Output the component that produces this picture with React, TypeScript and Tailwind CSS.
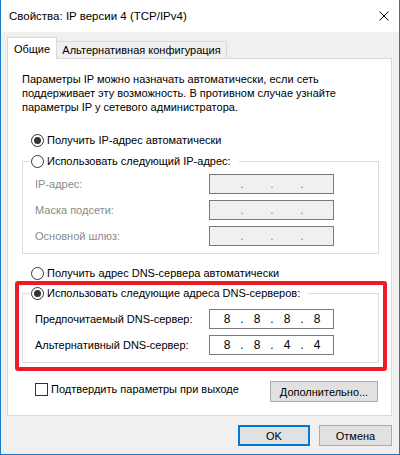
import type { ReactNode } from "react";

function Radio({ checked }: { checked?: boolean }) {
  return (
    <span className="flex h-[13px] w-[13px] shrink-0 items-center justify-center rounded-full border border-[#333333] bg-white">
      {checked ? <span className="h-[7px] w-[7px] rounded-full bg-[#333333]" /> : null}
    </span>
  );
}

function RadioRow({ checked, label }: { checked?: boolean; label: string }) {
  return (
    <div className="flex h-[14px] items-center gap-[3px] whitespace-nowrap">
      <Radio checked={checked} />
      <span>{label}</span>
    </div>
  );
}

function IpField({ value, disabled }: { value?: string[]; disabled?: boolean }) {
  const octets = value ?? ["", "", "", ""];
  return (
    <div
      className={`flex h-[20px] w-[125px] items-center border border-[#7a7a7a] pl-[5px] text-[12px] ${
        disabled ? "bg-[#f0f0f0] text-[#8a8a8a]" : "bg-white text-black"
      }`}
    >
      {octets.map((octet, i) => (
        <div key={i} className="flex items-center">
          <span className="w-[24px] text-center">{octet}</span>
          {i < 3 ? <span className="w-[6px] text-center">.</span> : null}
        </div>
      ))}
    </div>
  );
}

function Group({ legend, children, className }: { legend: ReactNode; children: ReactNode; className?: string }) {
  return (
    <fieldset className={`border border-[#dcdcdc] ${className ?? ""}`}>
      <legend className="ml-[7px] pl-[1px] pr-[8px]">{legend}</legend>
      {children}
    </fieldset>
  );
}

function FieldRow({ label, disabled, value }: { label: string; disabled?: boolean; value?: string[] }) {
  return (
    <div className="flex items-center">
      <span className={`w-[174px] whitespace-nowrap ${disabled ? "text-[#8a8a8a]" : "text-black"}`}>{label}</span>
      <IpField value={value} disabled={disabled} />
    </div>
  );
}

export default function App() {
  return (
    <div className="flex h-[455px] w-[400px] flex-col border-x border-b border-[#1979ca] bg-[#f0f0f0] font-['Liberation_Sans',Arial,sans-serif] text-[11px] leading-[14px] text-black">
      {/* title bar */}
      <div className="flex h-[32px] shrink-0 items-center justify-between bg-white pl-[8px] pr-[10px]">
        <span className="text-[11.5px]">Свойства: IP версии 4 (TCP/IPv4)</span>
        <svg width="10" height="10" viewBox="0 0 10 10">
          <path d="M0.5 0.5 L9.5 9.5 M9.5 0.5 L0.5 9.5" stroke="#000" strokeWidth="1" />
        </svg>
      </div>

      <div className="flex flex-1 flex-col pl-[6px] pr-[7px] pt-[5px]">
        {/* tabs */}
        <div className="flex h-[21px] items-end">
          <div className="relative z-10 mb-[-1px] flex h-[22px] w-[50px] items-center justify-center border-x border-t border-[#d9d9d9] bg-white">
            Общие
          </div>
          <div className="flex h-[17px] w-[170px] items-center justify-center whitespace-nowrap border-r border-t border-[#d9d9d9] bg-[#f0f0f0]">
            Альтернативная конфигурация
          </div>
        </div>

        {/* panel */}
        <div className="flex flex-col border border-[#d9d9d9] bg-white pb-[13px] pl-[14px] pr-[12px] pt-[13px]">
          <p className="whitespace-nowrap">
            Параметры IP можно назначать автоматически, если сеть
            <br />
            поддерживает эту возможность. В противном случае узнайте
            <br />
            параметры IP у сетевого администратора.
          </p>

          <div className="ml-[9px] mt-[19px]">
            <RadioRow checked label="Получить IP-адрес автоматически" />
          </div>

          <Group className="mt-[7px] pb-[7px]" legend={<RadioRow label="Использовать следующий IP-адрес:" />}>
            <div className="mt-[6px] flex flex-col gap-[6px] pl-[12px]">
              <FieldRow label="IP-адрес:" disabled />
              <FieldRow label="Маска подсети:" disabled />
              <FieldRow label="Основной шлюз:" disabled />
            </div>
          </Group>

          <div className="ml-[9px] mt-[12px]">
            <RadioRow label="Получить адрес DNS-сервера автоматически" />
          </div>

          <div className="-ml-[7px] -mr-[8px] mt-[1px] rounded-[3px] border-[4px] border-[#ed1c24] pb-[4px] pl-[3px] pr-[4px] pt-[1px]">
            <Group className="pb-[7px]" legend={<RadioRow checked label="Использовать следующие адреса DNS-серверов:" />}>
              <div className="mt-[9px] flex flex-col gap-[6px] pl-[12px]">
                <FieldRow label="Предпочитаемый DNS-сервер:" value={["8", "8", "8", "8"]} />
                <FieldRow label="Альтернативный DNS-сервер:" value={["8", "8", "4", "4"]} />
              </div>
            </Group>
          </div>

          <div className="mr-[1px] mt-[10px] flex items-start justify-between">
            <div className="ml-[13px] mt-[1px] flex items-center gap-[3px] whitespace-nowrap">
              <span className="h-[13px] w-[13px] border border-[#333333] bg-white" />
              <span>Подтвердить параметры при выходе</span>
            </div>
            <button className="flex h-[21px] w-[108px] items-center justify-center border border-[#adadad] bg-[#e1e1e1]">
              Дополнительно...
            </button>
          </div>
        </div>

        {/* footer */}
        <div className="mt-[9px] flex justify-end gap-[9px]">
          <button className="flex h-[21px] w-[72px] items-center justify-center border-2 border-[#0078d7] bg-[#e1e1e1]">
            OK
          </button>
          <button className="flex h-[21px] w-[73px] items-center justify-center border border-[#adadad] bg-[#e1e1e1]">
            Отмена
          </button>
        </div>
      </div>
    </div>
  );
}
